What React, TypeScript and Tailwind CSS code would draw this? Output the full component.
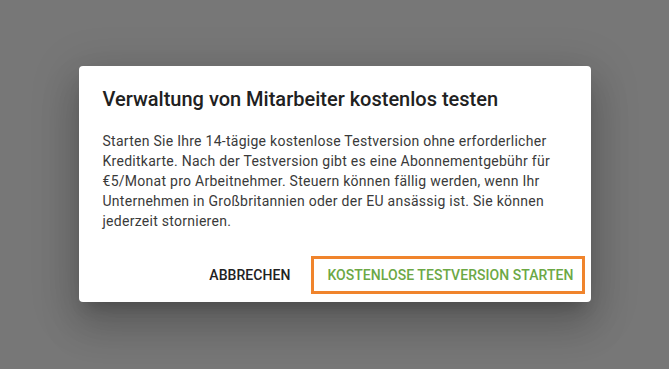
import React from "react";

export default function App() {
  return (
    <div
      className="w-[669px] h-[369px] bg-[#777777] flex items-center justify-center pb-[1px]"
      style={{ fontFamily: "Roboto, 'Liberation Sans', sans-serif" }}
    >
      <div className="w-[512px] bg-white rounded-[4px] shadow-[0_11px_15px_-7px_rgba(0,0,0,0.2),0_24px_38px_3px_rgba(0,0,0,0.14),0_9px_46px_8px_rgba(0,0,0,0.12)] flex flex-col">
        <h2 className="px-6 pt-[17px] pb-4 text-[20px] leading-[32px] font-medium text-[#212121]">
          Verwaltung von Mitarbeiter kostenlos testen
        </h2>
        <p className="px-6 pb-5 text-[14px] leading-[20px] text-[#3a3a3a] tracking-[0.27px]">
          Starten Sie Ihre 14-tägige kostenlose Testversion ohne erforderlicher
          Kreditkarte. Nach der Testversion gibt es eine Abonnementgebühr für
          €5/Monat pro Arbeitnehmer. Steuern können fällig werden, wenn Ihr
          Unternehmen in Großbritannien oder der EU ansässig ist. Sie können
          jederzeit stornieren.
        </p>
        <div className="flex items-center justify-end pt-[5px] pb-[8px] pr-[6px] gap-[13px]">
          <button className="h-[38px] px-2 text-[14px] font-medium uppercase tracking-[0.05px] text-[#222222]">
            Abbrechen
          </button>
          <button className="h-[38px] pl-[13px] pr-[8px] border-[3px] border-[#f0842c] text-[14px] font-medium uppercase tracking-[0.05px] text-[#6ca845]">
            Kostenlose Testversion starten
          </button>
        </div>
      </div>
    </div>
  );
}
